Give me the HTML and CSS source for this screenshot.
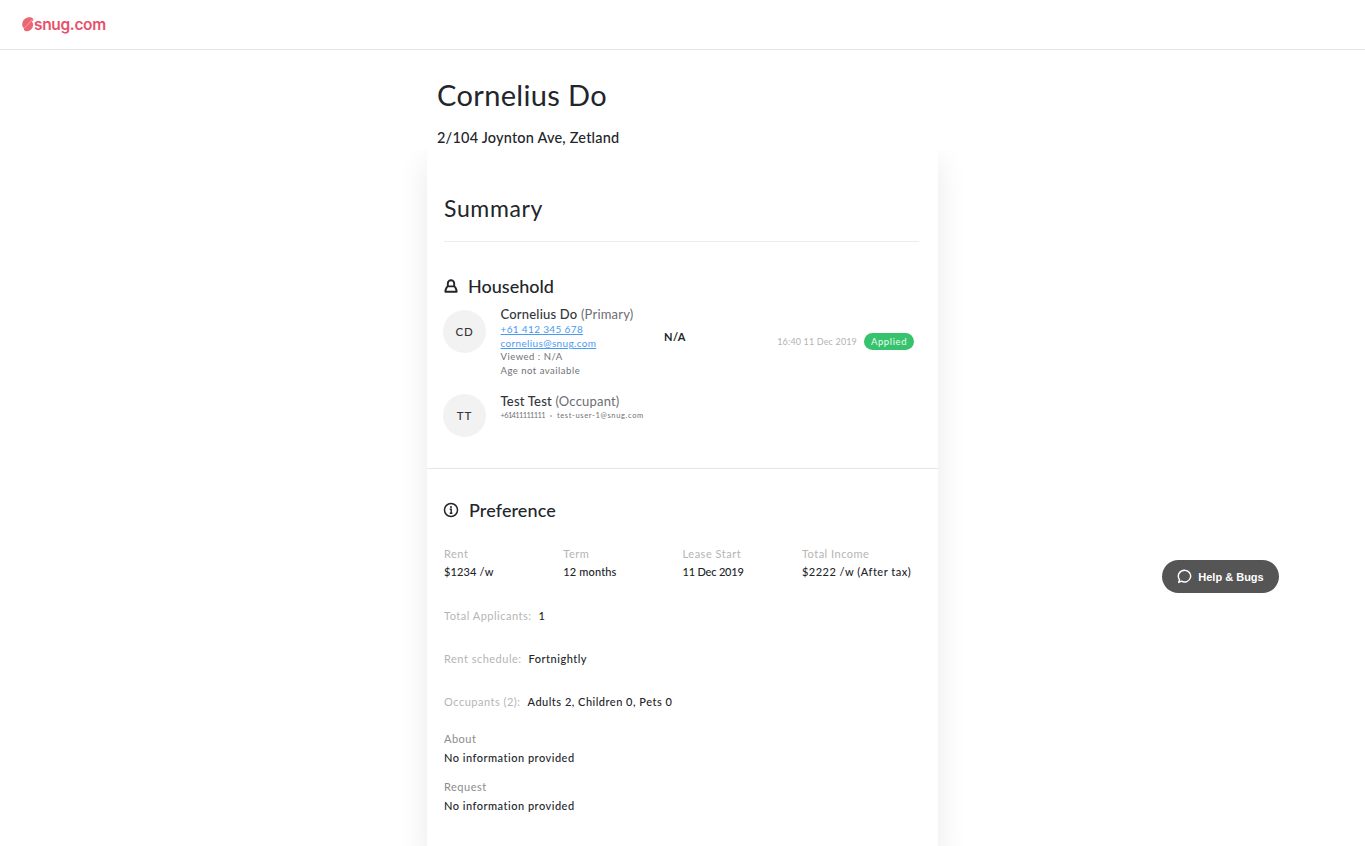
FILE: index.html
```html
<!DOCTYPE html>
<html lang="en">
<head>
<meta charset="utf-8">
<title>Cornelius Do</title>
<link rel="stylesheet" href="styles.css">
</head>
<body>
<header class="topbar">
  <a class="logo">
    <svg class="logo-mark" viewBox="0 0 12 15" width="12" height="15" aria-hidden="true"><path d="M5 .8C7.500-.2 10.800.4 11.300 2.200 11.700 3.600 10.600 4 9.400 4.600 11.200 5.600 11.600 8 10.600 10.200 9.400 12.800 6.600 14.600 4.200 14.200 2.200 13.900 1.700 12.600 2 11.200 .6 10.200-.2 8.200.4 6 .8 3.800 2.600 1.600 5 .8Z" fill="#ea6874"/><path d="M10.600 2.200 2.200 11.400" stroke="#f7c4ca" stroke-width=".6" fill="none"/></svg>
    <span class="logo-text">snug.com</span>
  </a>
</header>
<main class="page">
  <div class="intro">
    <h1 class="name">Cornelius Do</h1>
    <p class="address">2/104 Joynton Ave, Zetland</p>
  </div>
  <section class="card">
    <div class="summary"><h2 class="summary-title">Summary</h2></div>
    <div class="household">
      <h3 class="section-title">
        <svg class="icon-user" viewBox="0 0 14 14" width="14" height="14" aria-hidden="true"><path d="M3.800 7.400V4.400a3.200 3.200 0 0 1 6.400 0v3M3.800 7.400h6.400M1.400 12.800c0-3 1.800-5.400 2.400-5.400h6.400c.6 0 2.400 2.400 2.400 5.400Z" fill="none" stroke="#22252a" stroke-width="1.900" stroke-linejoin="round"/></svg>
        Household
      </h3>
      <div class="person person-primary">
        <div class="avatar">CD</div>
        <div class="person-info">
          <div class="person-name">Cornelius Do <span class="role">(Primary)</span></div>
          <a class="link">+61 412 345 678</a>
          <a class="link">cornelius@snug.com</a>
          <div class="meta">Viewed : N/A</div>
          <div class="meta">Age not available</div>
        </div>
        <div class="score">N/A</div>
        <div class="status">
          <span class="timestamp">16:40 11 Dec 2019</span>
          <span class="badge">Applied</span>
        </div>
      </div>
      <div class="person person-secondary">
        <div class="avatar">TT</div>
        <div class="person-info">
          <div class="person-name">Test Test <span class="role">(Occupant)</span></div>
          <div class="contact"><span class="phone">+61411111111</span><span class="dot"></span><span class="email">test-user-1@snug.com</span></div>
        </div>
      </div>
    </div>
    <div class="preference">
      <h3 class="section-title section-title-pref">
        <svg class="icon-info" viewBox="0 0 16 16" width="16" height="16" aria-hidden="true"><circle cx="8" cy="8" r="6.500" fill="none" stroke="#22252a" stroke-width="1.500"/><path d="M6.700 7.200H8.200V11M6.700 11.200H9.400" fill="none" stroke="#22252a" stroke-width="1.400"/><circle cx="8" cy="4.900" r="1" fill="#22252a"/></svg>
        Preference
      </h3>
      <div class="stats">
        <div><div class="label">Rent</div><div class="value">$1234 /w</div></div>
        <div><div class="label">Term</div><div class="value">12 months</div></div>
        <div><div class="label">Lease Start</div><div class="value value-date">11 Dec 2019</div></div>
        <div><div class="label">Total Income</div><div class="value value-wide">$2222 /w (After tax)</div></div>
      </div>
      <div class="inline-row"><span class="label">Total Applicants:</span><span class="value">1</span></div>
      <div class="inline-row"><span class="label">Rent schedule:</span><span class="value">Fortnightly</span></div>
      <div class="inline-row"><span class="label">Occupants (2):</span><span class="value">Adults 2, Children 0, Pets 0</span></div>
      <div class="block-row"><div class="label label-dark">About</div><div class="value">No information provided</div></div>
      <div class="block-row block-row-tight"><div class="label label-dark">Request</div><div class="value">No information provided</div></div>
    </div>
  </section>
</main>
<button class="help">
  <svg viewBox="0 0 16 16" width="15" height="15" aria-hidden="true"><path d="M8 1.300a6.500 6.300 0 1 1-3.300 11.700L1.800 14.300l.9-3A6.500 6.300 0 0 1 8 1.300Z" fill="none" stroke="#fff" stroke-width="1.500" stroke-linejoin="round"/></svg>
  Help &amp; Bugs
</button>
</body>
</html>
```
FILE: styles.css
```css
* { box-sizing: border-box; }
html, body { margin: 0; height: 846px; overflow: hidden; background: #fff; }
body { font-family: "Lato", "Liberation Sans", sans-serif; color: #22252a; position: relative; }
h1, h2, h3, p { margin: 0; font-weight: 400; }

.topbar { height: 50px; border-bottom: 1px solid #e6e6e6; display: flex; align-items: center; padding: 0 0 0 22px; position: relative; z-index: 2; background: #fff; }
.logo { display: flex; align-items: center; }
.logo-mark { display: block; }
.logo-text { font-family: "Inter", sans-serif; font-size: 15.5px; font-weight: 600; letter-spacing: -.35px; color: #e9506a; line-height: 18px; }

.page { width: 511px; margin-left: 427px; }
.intro { position: relative; z-index: 1; background: #fff; margin: 0 -60px; padding: 27px 70px 2px; }
.name { font-size: 29px; line-height: 36px; letter-spacing: .35px; }
.address { font-size: 14.5px; line-height: 20px; letter-spacing: .2px; margin-top: 15px; font-weight: 500; }

.card { background: #fff; box-shadow: 0 10px 30px rgba(0,0,0,.09); height: 704px; }
.summary { margin: 0 19px 0 17px; padding-top: 44px; height: 92px; border-bottom: 1px solid #ececec; }
.summary-title { font-size: 23px; line-height: 28px; letter-spacing: .65px; }

.household { padding: 32px 17px 0; height: 227px; border-bottom: 1px solid #e6e6e6; }
.section-title { display: flex; align-items: center; gap: 10px; font-size: 18px; line-height: 24px; letter-spacing: 0; font-weight: 500; }
.section-title-pref { letter-spacing: .1px; }
.icon-user { flex: none; }
.icon-info { flex: none; margin-left: -1px; }

.person { display: flex; position: relative; margin-top: 7px; }
.person-primary { margin-top: 8px; height: 77px; }
.person-secondary .person-info { padding-top: 3px; }
.avatar { flex: none; width: 43px; height: 43px; margin-top: 4px; margin-left: -1px; border-radius: 50%; background: #f2f2f2; display: flex; align-items: center; justify-content: center; font-size: 11.5px; letter-spacing: .9px; font-weight: 500; color: #33363a; }
.person-info { margin-left: 14.5px; width: 163px; flex: none; display: flex; flex-direction: column; align-items: flex-start; }
.person-name { font-size: 13px; line-height: 16px; letter-spacing: .2px; font-weight: 500; color: #33363a; white-space: nowrap; }
.role { color: #6b6e72; font-weight: 400; }
.link { font-size: 10px; line-height: 14px; letter-spacing: .35px; color: #4a9bf0; text-decoration: underline; }
.meta { font-size: 9.5px; line-height: 14px; letter-spacing: .5px; color: #6f7175; }
.contact { display: flex; align-items: center; margin-top: 2px; font-size: 7.5px; line-height: 10px; color: #6f7175; white-space: nowrap; }
.phone { letter-spacing: -.65px; }
.email { letter-spacing: .65px; }
.dot { width: 2px; height: 2px; border-radius: 50%; background: #b5b5b5; margin: 0 5px; }
.score { font-size: 11px; font-weight: 700; letter-spacing: .4px; line-height: 14px; margin-top: 24px; margin-left: .5px; }
.status { position: absolute; right: 7px; top: 27px; display: flex; align-items: center; gap: 7px; }
.timestamp { font-size: 9px; letter-spacing: .15px; color: #b3b3b3; }
.badge { background: #37c26e; color: #e8fff0; width: 50px; height: 17px; border-radius: 9px; display: flex; align-items: center; justify-content: center; font-size: 9.5px; letter-spacing: .6px; }

.preference { padding: 29px 17px 0; }
.stats { display: grid; grid-template-columns: repeat(4, 119.3px); margin-top: 24px; }
.stats .value { margin-top: 2px; letter-spacing: .15px; }
.stats .value-date { letter-spacing: -.2px; }
.stats .value-wide { letter-spacing: .5px; }
.label { font-size: 11px; line-height: 16px; letter-spacing: .5px; color: #b5b5b5; white-space: nowrap; }
.label-dark { color: #8c8c8c; }
.value { font-size: 11px; line-height: 16px; letter-spacing: .5px; color: #22252a; font-weight: 500; white-space: nowrap; margin-top: 3px; }
.inline-row { display: flex; align-items: center; gap: 7px; margin-top: 27px; }
.inline-row .value { margin-top: 0; }
.stats + .inline-row { margin-top: 28px; }
.block-row { margin-top: 21px; }
.block-row-tight { margin-top: 13px; }

.help { position: absolute; left: 1162px; top: 560px; width: 117px; height: 33px; border: 0; border-radius: 17px; background: #555; color: #fff; display: flex; align-items: center; justify-content: center; gap: 6px; font-family: "Liberation Sans", sans-serif; font-size: 11px; font-weight: 700; padding: 0; }
```
